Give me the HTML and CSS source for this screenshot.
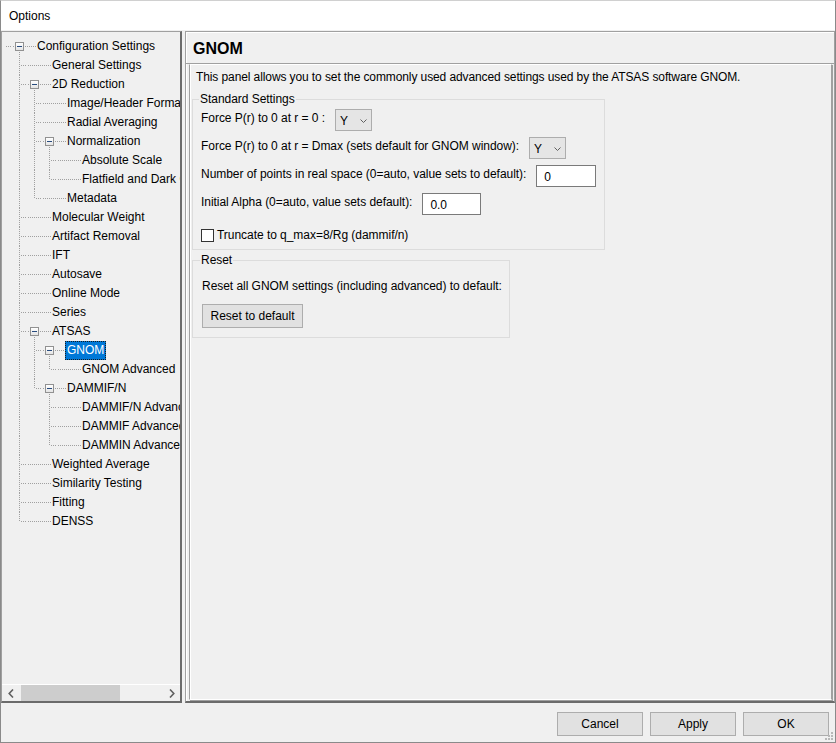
FILE: index.html
```html
<!DOCTYPE html>
<html>
<head>
<meta charset="utf-8">
<link rel="stylesheet" href="styles.css">
</head>
<body>
<div class="window">
  <div class="title">Options</div>
  <div class="main">
    <div class="tree-panel">
      <div class="tree">
        <div class="row root"><span class="lead"></span><span class="x exp"><i class="box"></i></span><span class="lbl">Configuration Settings</span></div>
        <div class="row"><span class="c t"></span><span class="x"></span><span class="lbl">General Settings</span></div>
        <div class="row"><span class="c t"></span><span class="x exp"><i class="box"></i></span><span class="lbl">2D Reduction</span></div>
        <div class="row"><span class="c v"></span><span class="c t"></span><span class="x"></span><span class="lbl">Image/Header Format</span></div>
        <div class="row"><span class="c v"></span><span class="c t"></span><span class="x"></span><span class="lbl">Radial Averaging</span></div>
        <div class="row"><span class="c v"></span><span class="c t"></span><span class="x exp"><i class="box"></i></span><span class="lbl">Normalization</span></div>
        <div class="row"><span class="c v"></span><span class="c v"></span><span class="c t"></span><span class="x"></span><span class="lbl">Absolute Scale</span></div>
        <div class="row"><span class="c v"></span><span class="c v"></span><span class="c l"></span><span class="x"></span><span class="lbl">Flatfield and Dark Correction</span></div>
        <div class="row"><span class="c v"></span><span class="c l"></span><span class="x"></span><span class="lbl">Metadata</span></div>
        <div class="row"><span class="c t"></span><span class="x"></span><span class="lbl">Molecular Weight</span></div>
        <div class="row"><span class="c t"></span><span class="x"></span><span class="lbl">Artifact Removal</span></div>
        <div class="row"><span class="c t"></span><span class="x"></span><span class="lbl">IFT</span></div>
        <div class="row"><span class="c t"></span><span class="x"></span><span class="lbl">Autosave</span></div>
        <div class="row"><span class="c t"></span><span class="x"></span><span class="lbl">Online Mode</span></div>
        <div class="row"><span class="c t"></span><span class="x"></span><span class="lbl">Series</span></div>
        <div class="row"><span class="c t"></span><span class="x exp"><i class="box"></i></span><span class="lbl">ATSAS</span></div>
        <div class="row"><span class="c v"></span><span class="c t"></span><span class="x exp"><i class="box"></i></span><span class="lbl sel">GNOM</span></div>
        <div class="row"><span class="c v"></span><span class="c v"></span><span class="c l"></span><span class="x"></span><span class="lbl">GNOM Advanced</span></div>
        <div class="row"><span class="c v"></span><span class="c l"></span><span class="x exp"><i class="box"></i></span><span class="lbl">DAMMIF/N</span></div>
        <div class="row"><span class="c v"></span><span class="c"></span><span class="c t"></span><span class="x"></span><span class="lbl">DAMMIF/N Advanced</span></div>
        <div class="row"><span class="c v"></span><span class="c"></span><span class="c t"></span><span class="x"></span><span class="lbl">DAMMIF Advanced</span></div>
        <div class="row"><span class="c v"></span><span class="c"></span><span class="c l"></span><span class="x"></span><span class="lbl">DAMMIN Advanced</span></div>
        <div class="row"><span class="c t"></span><span class="x"></span><span class="lbl">Weighted Average</span></div>
        <div class="row"><span class="c t"></span><span class="x"></span><span class="lbl">Similarity Testing</span></div>
        <div class="row"><span class="c t"></span><span class="x"></span><span class="lbl">Fitting</span></div>
        <div class="row"><span class="c l"></span><span class="x"></span><span class="lbl">DENSS</span></div>
      </div>
      <div class="hscroll">
        <span class="arrow"><svg width="6" height="9" viewBox="0 0 6 9"><path d="M5 0.5 L1.2 4.5 L5 8.5" fill="none" stroke="#606060" stroke-width="1.6"/></svg></span>
        <span class="track"><span class="thumb"></span></span>
        <span class="arrow"><svg width="6" height="9" viewBox="0 0 6 9"><path d="M1 0.5 L4.8 4.5 L1 8.5" fill="none" stroke="#606060" stroke-width="1.6"/></svg></span>
      </div>
    </div>
    <div class="right-panel">
      <div class="header">GNOM</div>
      <div class="content">
        <div class="desc">This panel allows you to set the commonly used advanced settings used by the ATSAS software GNOM.</div>
        <fieldset class="group std">
          <legend>Standard Settings</legend>
          <div class="frow">
            <span class="flabel">Force P(r) to 0 at r = 0 :</span>
            <span class="combo">Y<svg class="chev" width="7" height="4" viewBox="0 0 7 4"><path d="M0.5 0.5 L3.5 3.5 L6.5 0.5" fill="none" stroke="#606060" stroke-width="1"/></svg></span>
          </div>
          <div class="frow">
            <span class="flabel">Force P(r) to 0 at r = Dmax (sets default for GNOM window):</span>
            <span class="combo">Y<svg class="chev" width="7" height="4" viewBox="0 0 7 4"><path d="M0.5 0.5 L3.5 3.5 L6.5 0.5" fill="none" stroke="#606060" stroke-width="1"/></svg></span>
          </div>
          <div class="frow">
            <span class="flabel">Number of points in real space (0=auto, value sets to default):</span>
            <span class="input w60">0</span>
          </div>
          <div class="frow">
            <span class="flabel">Initial Alpha (0=auto, value sets default):</span>
            <span class="input w59">0.0</span>
          </div>
          <div class="crow">
            <span class="check"></span>
            <span>Truncate to q_max=8/Rg (dammif/n)</span>
          </div>
        </fieldset>
        <fieldset class="group reset">
          <legend>Reset</legend>
          <div class="rtext">Reset all GNOM settings (including advanced) to default:</div>
          <button class="btn rbtn">Reset to default</button>
        </fieldset>
      </div>
    </div>
  </div>
  <div class="footer">
    <button class="btn">Cancel</button>
    <button class="btn">Apply</button>
    <button class="btn">OK</button>
  </div>
  <svg class="grip" width="8" height="8" viewBox="0 0 8 8">
    <rect x="6" y="0" width="2" height="2" fill="#b8b8b8"/>
    <rect x="3" y="3" width="2" height="2" fill="#b8b8b8"/>
    <rect x="6" y="3" width="2" height="2" fill="#b8b8b8"/>
    <rect x="0" y="6" width="2" height="2" fill="#b8b8b8"/>
    <rect x="3" y="6" width="2" height="2" fill="#b8b8b8"/>
    <rect x="6" y="6" width="2" height="2" fill="#b8b8b8"/>
  </svg>
</div>
</body>
</html>
```

FILE: styles.css
```css
* { box-sizing: border-box; }
html, body { margin: 0; padding: 0; }
body {
  font-family: "Liberation Sans", Arial, sans-serif;
  font-size: 12px;
  color: #000;
  background: #f0f0f0;
}
.window {
  position: relative;
  width: 836px;
  height: 743px;
  border: 1px solid #8a8a8a;
  border-top-color: #d0d0d0;
  background: #f0f0f0;
  display: flex;
  flex-direction: column;
  overflow: hidden;
}
.title {
  height: 29px;
  background: #fff;
  padding-left: 8px;
  line-height: 30px;
  flex: none;
}
.main {
  height: 673px;
  flex: none;
  display: flex;
  padding-top: 1px;
}
.tree-panel {
  width: 181px;
  flex: none;
  border-top: 1px solid #a0a0a0;
  border-left: 1px solid #a0a0a0;
  border-right: 2px solid #6b6b6b;
  border-bottom: 2px solid #6b6b6b;
  display: flex;
  flex-direction: column;
  background: #f0f0f0;
}
.tree {
  flex: 1;
  overflow: hidden;
  padding-top: 5px;
}
.row {
  display: flex;
  height: 19px;
  padding-left: 10px;
  white-space: nowrap;
}
.row.root { padding-left: 4px; }
.lead {
  width: 6px;
  flex: none;
  background: repeating-linear-gradient(to right, #a0a0a0 0 1px, transparent 1px 2px) 0 9px / 6px 1px no-repeat;
}
.c {
  width: 15px;
  flex: none;
}
.c.v {
  background: repeating-linear-gradient(to bottom, #a0a0a0 0 1px, transparent 1px 2px) 7px 0 / 1px 19px no-repeat;
}
.c.t {
  background:
    repeating-linear-gradient(to bottom, #a0a0a0 0 1px, transparent 1px 2px) 7px 0 / 1px 19px no-repeat,
    repeating-linear-gradient(to right, #a0a0a0 0 1px, transparent 1px 2px) 9px 9px / 6px 1px no-repeat;
}
.c.l {
  background:
    repeating-linear-gradient(to bottom, #a0a0a0 0 1px, transparent 1px 2px) 7px 0 / 1px 10px no-repeat,
    repeating-linear-gradient(to right, #a0a0a0 0 1px, transparent 1px 2px) 9px 9px / 6px 1px no-repeat;
}
.x {
  width: 25px;
  flex: none;
  display: flex;
  align-items: center;
  background: repeating-linear-gradient(to right, #a0a0a0 0 1px, transparent 1px 2px) 1px 9px / 24px 1px no-repeat;
}
.x.exp {
  background:
    repeating-linear-gradient(to bottom, #a0a0a0 0 1px, transparent 1px 2px) 7px 11px / 1px 8px no-repeat,
    repeating-linear-gradient(to right, #a0a0a0 0 1px, transparent 1px 2px) 1px 9px / 24px 1px no-repeat;
}
.box {
  display: block;
  width: 9px;
  height: 9px;
  margin-left: 3px;
  border: 1px solid #919191;
  background:
    linear-gradient(#274b7e, #274b7e) 1px 3px / 5px 1px no-repeat,
    linear-gradient(#ffffff, #e4e4e4);
}
.lbl {
  display: block;
  height: 19px;
  line-height: 19px;
  padding: 0 2px;
  margin-left: -2px;
}
.lbl.sel {
  background: #0078d7;
  color: #fff;
  outline: 1px dotted #1a1a1a;
  outline-offset: -1px;
}
.hscroll {
  height: 17px;
  flex: none;
  display: flex;
  align-items: center;
  border-top: 1px solid #fff;
  background: #f0f0f0;
}
.arrow {
  width: 17px;
  height: 16px;
  display: flex;
  align-items: center;
  justify-content: center;
  flex: none;
}
.track {
  flex: 1;
  height: 16px;
  display: flex;
  padding-left: 2px;
}
.thumb {
  width: 99px;
  height: 16px;
  background: #cdcdcd;
}
.right-panel {
  flex: 1;
  margin-left: 3px;
  border-top: 1px solid #a0a0a0;
  border-left: 1px solid #a0a0a0;
  border-right: 1px solid #a0a0a0;
  border-bottom: 2px solid #6b6b6b;
  box-shadow: inset 1px 1px 0 #fff;
  display: flex;
  flex-direction: column;
}
.header {
  height: 32px;
  flex: none;
  font-size: 16px;
  font-weight: bold;
  line-height: 32px;
  padding-left: 7px;
  border-bottom: 1px solid #a0a0a0;
  padding-top: 1px;
}
.content {
  flex: 1;
  margin: 0 2px 1px 3px;
  border-top: 1px solid #fff;
  border-left: 1px solid #a0a0a0;
  border-right: 1px solid #a0a0a0;
  border-bottom: 1px solid #fff;
  box-shadow: inset 1px 0 0 #fff, 1px 1px 0 #a0a0a0;
  padding: 2px 2px 0 2px;
  letter-spacing: -0.04px;
}
.desc {
  line-height: 16px;
  padding-left: 4px;
  margin-top: 2px;
  white-space: nowrap;
  letter-spacing: -0.1px;
}
.group {
  margin: 0;
  border: 1px solid #dcdcdc;
  min-width: 0;
}
.group legend {
  padding: 0 1px;
  margin-left: -2px;
  line-height: 16px;
}
.std {
  width: 413px;
  margin-top: 6px;
  padding: 2px 8px 6px 8px;
}
.frow {
  display: flex;
  align-items: flex-start;
  height: 22px;
  margin-bottom: 6px;
  gap: 10px;
  white-space: nowrap;
}
.flabel { line-height: 16px; padding-top: 1px; }
.combo {
  width: 37px;
  height: 22px;
  background: #e5e5e5;
  border: 1px solid #adadad;
  display: flex;
  align-items: center;
  padding-left: 4px;
  line-height: 20px;
  padding-top: 2px;
}
.chev { margin-left: auto; margin-right: 4px; margin-top: -1px; }
.input {
  height: 22px;
  background: #fff;
  border: 1px solid #7a7a7a;
  padding-left: 7px;
  line-height: 22px;
}
.w60 { width: 60px; }
.w59 { width: 59px; }
.crow {
  display: flex;
  align-items: center;
  height: 16px;
  margin-top: 12px;
  gap: 3px;
  white-space: nowrap;
}
.check {
  width: 13px;
  height: 13px;
  border: 1px solid #333;
  background: #fff;
}
.reset {
  width: 318px;
  margin-top: 2px;
  padding: 10px 8px 9px 9px;
}
.rtext { line-height: 16px; white-space: nowrap; }
.btn {
  font-family: "Liberation Sans", Arial, sans-serif;
  font-size: 12px;
  color: #000;
  background: #e1e1e1;
  border: 1px solid #adadad;
  border-radius: 0;
  padding: 0;
}
.rbtn {
  margin-top: 10px;
  width: 101px;
  height: 24px;
  display: block;
}
.footer {
  flex: 1;
  display: flex;
  justify-content: flex-end;
  align-items: flex-start;
  gap: 7px;
  padding: 9px 6px 0 0;
}
.footer .btn {
  width: 86px;
  height: 24px;
}
.grip {
  position: absolute;
  right: 2px;
  bottom: 2px;
}
```
